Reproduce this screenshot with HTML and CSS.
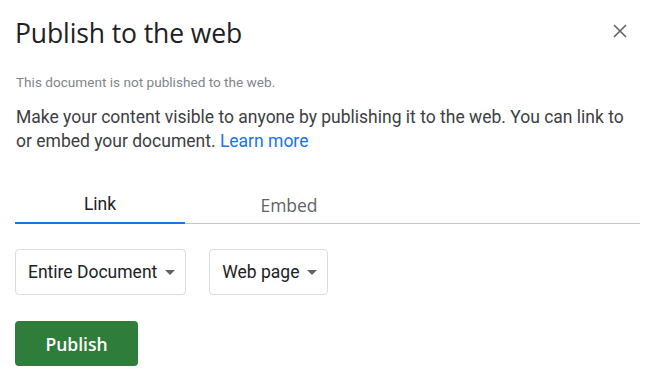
FILE: index.html
```html
<!DOCTYPE html>
<html>
<head>
<meta charset="utf-8">
<link rel="stylesheet" href="styles.css">
</head>
<body>
<div class="dialog">
  <div class="header">
    <h1 class="title">Publish to the web</h1>
    <button class="close" aria-label="Close">
      <svg width="14" height="14" viewBox="0 0 14 14"><path d="M1 1 L13 13 M13 1 L1 13" stroke="#5f6368" stroke-width="1.6" fill="none"/></svg>
    </button>
  </div>
  <p class="status">This document is not published to the web.</p>
  <p class="desc">Make your content visible to anyone by publishing it to the web. You can link to or embed your document. <a class="link" href="#">Learn more</a></p>
  <div class="tabs">
    <div class="tab active">Link</div>
    <div class="tab">Embed</div>
  </div>
  <div class="selects">
    <div class="select">Entire Document <span class="caret"></span></div>
    <div class="select">Web page <span class="caret"></span></div>
  </div>
  <button class="publish">Publish</button>
</div>
</body>
</html>
```
FILE: styles.css
```css
* { box-sizing: border-box; }
body {
  margin: 0;
  background: #fff;
  font-family: Roboto, "Liberation Sans", sans-serif;
}
.dialog {
  padding: 16px 9px 0 15px;
  width: 649px;
}
.header {
  display: flex;
  align-items: center;
  justify-content: space-between;
  height: 34px;
}
.title {
  margin: 0;
  font-family: "Open Sans", sans-serif;
  font-weight: 400;
  font-size: 26.5px;
  line-height: 34px;
  color: #202124;
  letter-spacing: -0.1px;
}
.close {
  border: 0;
  background: none;
  padding: 0;
  width: 14px;
  height: 14px;
  margin: 0 13px 4px 0;
  display: flex;
}
.status {
  margin: 23px 0 0 1px;
  font-size: 13.6px;
  line-height: 18px;
  color: #80868b;
}
.desc {
  margin: 14px 0 0 1px;
  font-size: 17.5px;
  line-height: 24px;
  color: #3c4043;
}
.link {
  color: #1a73e8;
  text-decoration: none;
}
.tabs {
  display: flex;
  margin-top: 33px;
  border-bottom: 1px solid #c6c6c6;
  height: 38px;
}
.tab {
  font-family: "Open Sans", sans-serif;
  font-size: 17.5px;
  color: #5f6368;
  text-align: center;
  line-height: 38px;
}
.tab:first-child { width: 170px; }
.tab:nth-child(2) { width: 208px; }
.tab.active {
  font-family: Roboto, sans-serif;
  color: #202124;
  border-bottom: 2px solid #1a73e8;
  margin-bottom: -1px;
  line-height: 37px;
}
.selects {
  display: flex;
  gap: 23px;
  margin-top: 25px;
}
.select {
  display: flex;
  align-items: center;
  gap: 8px;
  height: 46px;
  padding: 0 10px 0 12px;
  border: 1px solid #dadce0;
  border-radius: 4px;
  font-size: 17.5px;
  color: #202124;
}
.caret {
  width: 0;
  height: 0;
  border-left: 5px solid transparent;
  border-right: 5px solid transparent;
  border-top: 5px solid #5f6368;
}
.publish {
  display: block;
  margin-top: 26px;
  width: 123px;
  height: 45px;
  border: 0;
  border-radius: 4px;
  background: #2e7d3a;
  color: #fff;
  font-family: "Open Sans", sans-serif;
  font-weight: 600;
  font-size: 17.5px;
}
```
